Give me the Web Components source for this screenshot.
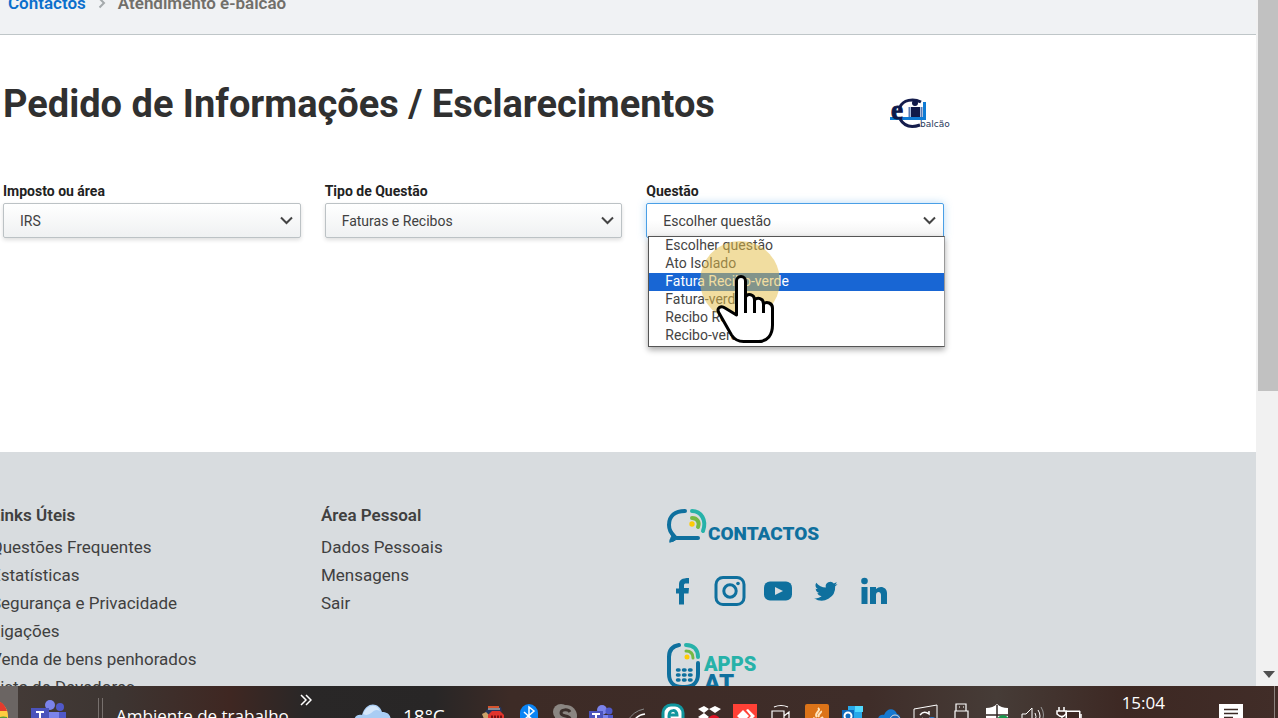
<!DOCTYPE html>
<html lang="pt">
<head>
<meta charset="utf-8">
<meta name="viewport" content="width=device-width, initial-scale=1">
<title>Atendimento e-balcão</title>
<style>
html, body { margin: 0; height: 100%; overflow: hidden; }
body { font-family: Roboto, "Liberation Sans", sans-serif; color: #333; background: #fff; }
</style>
</head>
<body>
<screen-app></screen-app>
<script>
function define(name, html, setup) {
  const tpl = document.createElement('template');
  tpl.innerHTML = html;
  customElements.define(name, class extends HTMLElement {
    constructor() {
      super();
      this.attachShadow({ mode: 'open' }).append(tpl.content.cloneNode(true));
    }
    connectedCallback() {
      if (setup && !this.ready) { this.ready = true; setup(this, this.shadowRoot); }
    }
  });
}

define('bread-crumb', `
<style>
:host { display: flex; align-items: flex-start; height: 34px; overflow: hidden; background: #f0f2f4; border-bottom: 1px solid #bfc6c8; }
nav { display: flex; align-items: center; gap: 12px; margin-top: -9px; padding-left: 8px; font-size: 17px; line-height: 24px; font-weight: 600; color: #716f6a; }
a { color: #0b6fcc; text-decoration: none; }
svg { width: 8px; height: 12px; }
</style>
<nav aria-label="Percurso"><a href="#contactos">Contactos</a>
<svg viewBox="0 0 8 12" fill="none" stroke="#a5aaac" stroke-width="2"><path d="M1.5 1.500L6 6 1.500 10.500"/></svg>
<span>Atendimento e-balcão</span></nav>`);

define('balcao-logo', `
<style>
:host { display: block; width: 64px; height: 34px; }
svg { display: block; width: 100%; height: 100%; }
</style>
<svg viewBox="0 0 64 34" role="img" aria-label="e-balcão">
<path d="M35 5h3v18H2v-3h33z" fill="#0f7bd4"/>
<path d="M12 10C15 3 25 1 33 5M12 22C16 29 23 31 32 28" fill="none" stroke="#151d4c" stroke-width="3"/>
<circle cx="27" cy="6" r="3" fill="#111a49"/><path d="M23 10h9v10h-9z" fill="#111a49"/><path d="M21.500 10v10M33.500 10v10" stroke="#5a7ab4" stroke-width="2"/>
<text x="3" y="22" font-family="Liberation Serif, serif" font-size="27" font-weight="700" fill="#0c184b" stroke="#0c184b">e</text>
<text x="32" y="30" font-family="DejaVu Sans, sans-serif" font-size="9" fill="#29395c">balcão</text>
</svg>`);

define('select-field', `
<style>
:host { display: block; position: relative; min-width: 0; }
label { display: block; font-size: 14px; line-height: 20px; font-weight: 700; color: #222; margin-bottom: 2px; }
.box { position: relative; }
select { appearance: none; display: block; box-sizing: border-box; width: 100%; height: 35px; padding: 0 40px 0 16px; border: 1px solid #bcc2c5; border-radius: 2px;
  background: linear-gradient(#fff, #eff1f2); box-shadow: 0 2px 4px #0002; font: 14px/20px Roboto, sans-serif; color: #404040; outline: 0; }
:host([open]) select { border-color: #4a9fe6; box-shadow: 0 0 8px #4a9fe666; background: linear-gradient(#fff 50%, #f2f2f2); }
.box svg { position: absolute; right: 8px; top: 13px; width: 13px; height: 9px; pointer-events: none; }
</style>
<label for="control"></label>
<div class="box"><select id="control"></select>
<svg viewBox="0 0 13 9" fill="none" stroke="#444" stroke-width="2"><path d="M1 1.500L6.500 7 12 1.500"/></svg></div>
<slot></slot>`, (el, root) => {
  root.querySelector('label').textContent = el.getAttribute('label');
  for (const text of el.getAttribute('options').split('|')) root.querySelector('select').add(new Option(text));
});

define('option-popup', `
<style>
:host { position: absolute; z-index: 2; left: 2px; right: -1px; top: 55px; }
ul { margin: 0; padding: 0 0 1px; list-style: none; background: #fff; border: 1px solid #555; border-right-color: #999; box-shadow: 0 3px 6px #0005; }
li { padding: 0 0 2px 16px; font-size: 14px; line-height: 16px; color: #444; }
li[aria-selected=true] { background: #1866d4; color: #fff; }
</style>
<ul role="listbox" aria-label="Questão"></ul>`, (el, root) => {
  for (const text of el.getAttribute('options').split('|')) {
    const li = document.createElement('li');
    li.setAttribute('role', 'option');
    li.setAttribute('aria-selected', String(text === el.getAttribute('active')));
    li.textContent = text;
    root.querySelector('ul').append(li);
  }
});

define('hand-pointer', `
<style>
:host { position: absolute; z-index: 3; left: 54px; top: 60px; width: 80px; height: 106px; pointer-events: none; }
svg { display: block; }
</style>
<svg width="80" height="106" viewBox="700 241 80 106" aria-hidden="true">
<circle cx="740" cy="281" r="40" fill="#e5bd49" fill-opacity=".52"/>
<path d="M736.500 315V281a4.500 4.500 0 0 1 9 0v16c2-4 9-3 9 3 3-3 9-2 9 4 3-3 9-1 9 4v17c0 10-5 16.500-14 16.500h-15c-5 0-9-2-12-6.500L719 313c-3-5 2-8 6-5z" fill="#fff" stroke="#000" stroke-width="3" stroke-linejoin="round"/>
<path d="M745.500 295v18M754.500 299v14M763.500 303v10" stroke="#000" stroke-width="3"/>
</svg>`);

define('request-form', `
<style>
:host { display: block; flex: 0 0 417px; }
.wrap { max-width: 941px; padding-left: 3px; }
header { display: flex; justify-content: space-between; align-items: center; height: 50px; padding-top: 44px; }
h1 { margin: 0; font-size: 38px; line-height: 50px; font-weight: 700; color: #303030; white-space: nowrap; }
balcao-logo { margin: 20px -8px 0 0; }
form { display: grid; grid-template-columns: repeat(3, minmax(0, 1fr)); gap: 24px; margin-top: 52px; }
</style>
<div class="wrap"><header><h1>Pedido de Informações / Esclarecimentos</h1><balcao-logo></balcao-logo></header>
<form>
<select-field label="Imposto ou área" options="IRS"></select-field>
<select-field label="Tipo de Questão" options="Faturas e Recibos"></select-field>
<select-field open label="Questão" options="Escolher questão|Ato Isolado|Fatura Recibo-verde|Fatura-verde|Recibo Renda|Recibo-verde">
<option-popup active="Fatura Recibo-verde" options="Escolher questão|Ato Isolado|Fatura Recibo-verde|Fatura-verde|Recibo Renda|Recibo-verde"></option-popup>
<hand-pointer></hand-pointer></select-field>
</form></div>`);

define('link-list', `
<style>
:host { display: block; min-width: 0; white-space: nowrap; }
h2 { margin: 0 0 4px; font-size: 17px; line-height: 28px; font-weight: 600; color: #404040; }
::slotted(a) { display: block; font-size: 17px; line-height: 28px; color: #404040; text-decoration: none; }
</style>
<h2></h2><slot></slot>`, (el, root) => { root.querySelector('h2').textContent = el.getAttribute('heading'); });

define('contact-panel', `
<style>
:host { display: block; }
a { display: block; text-decoration: none; }
.brand { display: flex; height: 36px; }
.brand b { font-size: 19px; line-height: 20px; font-weight: 900; color: #0f709e; margin: 16px 0 0 1px; }
.social { display: flex; align-items: center; height: 32px; margin: 31px 0 35px 2px; gap: 20px; }
.social a { width: 28px; height: 32px; }
svg { display: block; flex: none; overflow: visible; }
.brand.apps b { margin: 12px 0 0 -3px; color: #27b2a9; font-size: 20px; line-height: 20px; }
.apps span { display: block; font-size: 24px; line-height: 18px; color: #0f709e; }
</style>
<a class="brand" href="#contactos"><svg width="40" height="36" viewBox="0 0 40 36" fill="none" stroke-linecap="round" stroke-width="4">
<path d="M18 3C8 3 2 8 2 17c0 5 2 8 5 11M10 30h21" stroke="#0f709e"/><path d="M3 34c-1-3 2-4 2-8l8 4c-4 0-5 4-10 4z" fill="#0f709e" stroke="#0f709e" stroke-width="1"/>
<path d="M25 3c9 0 15 9 11 20" stroke="#27b2a9"/><path d="M25 10c5 0 8 4 6 9" stroke="#76b943"/><circle cx="25" cy="16" r="2.700" fill="#ffcb05"/></svg><b>CONTACTOS</b></a>
<div class="social">
<a href="#facebook" aria-label="Facebook"><svg width="28" height="32" viewBox="0 0 28 32" fill="#0f709e"><path d="M10 29.500V18.500H7v-5h3V9.500C10 5 13 3 20 3v5.500h-3c-1.500 0-2 .5-2 2v2.500h5l-.5 5.500H15v11z"/></svg></a>
<a href="#instagram" aria-label="Instagram"><svg width="28" height="32" viewBox="0 0 28 32" fill="none" stroke="#0f709e" stroke-width="3"><rect x="-1" y="2.500" width="28" height="27" rx="7"/><circle cx="13" cy="16" r="6.200"/><circle cx="21" cy="8.500" r="1.800" fill="#0f709e" stroke="none"/></svg></a>
<a href="#youtube" aria-label="YouTube"><svg width="28" height="32" viewBox="0 0 28 32"><rect y="6.500" x="-1" width="28" height="19" rx="6" fill="#0f709e"/><path d="M10 12v8l8-4z" fill="#d8dcdf"/></svg></a>
<a href="#twitter" aria-label="Twitter"><svg width="28" height="32" viewBox="1 0 24 24" fill="#0f709e"><path d="M22 6.100c-.7.300-1.500.5-2.300.6.800-.5 1.400-1.200 1.700-2.100-.8.400-1.600.7-2.500.9a4 4 0 0 0-6.900 3.600C8.700 9 5.800 7.400 3.800 5a4 4 0 0 0 1.200 5.300c-.6 0-1.200-.2-1.700-.5 0 2 1.400 3.600 3.100 3.900-.5.100-1.100.2-1.700.1.500 1.500 2 2.600 3.700 2.700A8 8 0 0 1 2 18.200a11.500 11.500 0 0 0 18-10.200c.8-.5 1.500-1.200 2-1.900z"/></svg></a>
<a href="#linkedin" aria-label="LinkedIn"><svg width="28" height="32" viewBox="0 0 28 32" fill="#0f709e"><circle cx="3.500" cy="6" r="3.300"/><path d="M.5 12h6v17h-6zM9 12h6v2c4-4 11-2 11 4v11h-6v-9c0-4-5-4-5 0v9H9z"/></svg></a>
</div>
<a class="brand apps" href="#apps"><svg width="40" height="48" viewBox="0 0 40 48" fill="none" stroke-linecap="round" stroke-width="4">
<path d="M12 3C6 4 2 8 2 15v17c0 7 4 13 13 13h3c9 0 13-6 13-13V21" stroke="#0f709e"/><path d="M19 3c8 0 12 5 12 12" stroke="#27b2a9"/><path d="M19 9c5 0 7 3 7 7" stroke="#76b943" stroke-width="3"/><circle cx="20" cy="15" r="2.500" fill="#ffcb05"/>
<path d="M10.500 28h1.500M16.500 28h1.500M22.500 28h1.500M10.500 33h1.500M16.500 33h1.500M22.500 33h1.500M10.500 38h1.500M16.500 38h1.500M22.500 38h1.500" stroke="#0f709e" stroke-width="3.500"/></svg><b>APPS<span>AT</span></b></a>`);

define('site-footer', `
<style>
:host { display: block; flex: 1; min-height: 0; overflow: hidden; background: #d8dcdf; }
.cols { display: grid; grid-template-columns: 330px 346px 1fr; margin-left: -9px; padding-top: 49px; }
contact-panel { margin-top: 7px; }
</style>
<div class="cols">
<link-list heading="Links Úteis"><a href="#1">Questões Frequentes</a><a href="#2">Estatísticas</a><a href="#3">Segurança e Privacidade</a><a href="#4">Ligações</a><a href="#5">Venda de bens penhorados</a><a href="#6">Lista de Devedores</a></link-list>
<link-list heading="Área Pessoal"><a href="#7">Dados Pessoais</a><a href="#8">Mensagens</a><a href="#9">Sair</a></link-list>
<contact-panel></contact-panel></div>`);

define('scroll-track', `
<style>
:host { display: flex; flex-direction: column; justify-content: space-between; align-items: center; width: 22px; background: #f1f1f1; }
i { display: block; width: 20px; height: 57%; margin-left: 2px; background: #c1c1c1; }
svg { width: 12px; height: 7px; margin: 0 0 8px 3px; }
</style><i></i><svg viewBox="0 0 12 7"><path d="M0 0h12L6 7z" fill="#505050"/></svg>`);

const trayIcons = {
  police: '<path d="M4 8l4-5h12l1 4-3 4H8z" fill="#26365d"/><path d="M7 2h11v2H7z" fill="#d5542f"/><path d="M7 5h12" stroke="#e8e0d0"/><path d="M1 10l4-2 3 3v4H3z" fill="#caa36b"/><path d="M11 7h8l4 4v8H7v-8z" fill="#e0342c"/><path d="M10 13h11" stroke="#711" stroke-width="3" stroke-dasharray="2 1"/>',
  bluetooth: '<rect x="3" width="18" height="26" rx="9" fill="#0a84f5"/><path d="M7 8l10 9-5 4V3l5 4-10 9" fill="none" stroke="#fff" stroke-width="1.500"/>',
  skype: '<circle cx="8" cy="8" r="8" fill="#8b8682"/><circle cx="13" cy="12" r="11" fill="#8b8682"/><path d="M17 8c-2-3-9-3-9 1s9 2 9 6-7 4-9 1" fill="none" stroke="#3c302c" stroke-width="3"/>',
  teams: '<circle cx="13" cy="6" r="5" fill="#7b83eb"/><circle cx="20" cy="7" r="3.500" fill="#5059c9"/><path d="M15 11h9v9h-9z" fill="#5059c9"/><path d="M7 11h12v14H7z" fill="#7b83eb"/><path d="M0 7h14v17H0z" fill="#4b53bc"/><path d="M3 10h8M7 10v10" stroke="#fff" stroke-width="2"/>',
  wifi: '<path d="M2 18Q8 7 19 5" fill="none" stroke="#888"/><path d="M7 20q4-9 13-10" fill="none" stroke="#fff" stroke-width="1.500"/>',
  eset: '<rect x="2" y="1" width="20" height="28" rx="8" fill="#fff" stroke="#11969e" stroke-width="3"/><path d="M8 11h8c0-6-8-6-8 1 0 6 5 6 8 4" fill="none" stroke="#11969e" stroke-width="3"/>',
  dropbox: '<path d="M1 5l6-3 5 3-5 4zM12 5l6-3 6 3-6 4zM1 13l6-4 5 4-5 4z" fill="#fff"/><circle cx="17" cy="17" r="6" fill="#e01224"/>',
  anydesk: '<path d="M0 0h24v24H0z" fill="#ff4136"/><path d="M4 12l6-6 6 6-6 6zM13 6l2-1 7 7-7 7-2-2 5-5z" fill="#fff"/>',
  camera: '<path d="M5 3q7-3 14 0M3 7h12v12H3zM15 12l5-4v11" fill="none" stroke="#fff" stroke-width="1.200"/>',
  java: '<rect width="24" height="24" rx="2" fill="#dc7318"/><path d="M13 4c4 3-5 5-1 9M16 7c1 2-4 3-2 6M8 14c4 2 8 1 10-1" fill="none" stroke="#ffe4bd" stroke-width="2"/>',
  outlook: '<path d="M7 2h14v14H7z" fill="#28a8ea"/><path d="M14 2h8v6h-8z" fill="#50d9ff"/><path d="M1 6h12v16H1z" fill="#0f6cbd"/><circle cx="7" cy="12" r="3.500" fill="none" stroke="#fff" stroke-width="2"/>',
  onedrive: '<path d="M1 16c0-5 4-6 6-5 3-8 11-7 13-1 5 1 4 9 0 9H3z" fill="#1478d0"/><circle cx="18" cy="16" r="5" fill="#1a66b5" stroke="#ddd"/>',
  sync: '<path d="M1 5l23-4v20H1z" fill="none" stroke="#fff"/><path d="M7 11q4-5 9-1v-3M17 14q-5 4-8 0" fill="none" stroke="#fff" stroke-width="1.500"/><circle cx="19" cy="17" r="4" fill="#287ed0"/>',
  usb: '<path d="M7 7V0h10v7M6 7h13v14H6zM10 3h1M14 3h1" fill="none" stroke="#fff" stroke-width="1.200"/>',
  shield: '<path d="M1 4q7 0 11-4 4 4 11 4v12H1z" fill="#fff"/><path d="M12 1v18M1 11h22" stroke="#322724" stroke-width="1.500"/><circle cx="18" cy="17" r="6" fill="#16964b"/>',
  sound: '<path d="M1 10h4l6-6v16l-6-5H1zM14 9q2 3 0 8M17 6q4 6 0 12" fill="none" stroke="#fff"/><path d="M20 3q5 8 0 16" fill="none" stroke="#999"/>',
  power: '<path d="M9 7h14v12H9z" fill="#fff" stroke="#fff"/><path d="M10 8h12v11H10z" fill="#3d2823"/><path d="M2 3v4M7 3v4M0 7h9v3q-4 5-9 0zM5 13v8M24 10v6" fill="#3d2823" stroke="#fff" stroke-width="1.500"/>'
};
define('tray-icon', `
<style>:host { display: grid; justify-items: center; } svg { display: block; width: 24px; height: 24px; overflow: visible; }</style>
<svg viewBox="0 0 24 24" aria-hidden="true"></svg>`, (el, root) => {
  root.querySelector('svg').innerHTML = trayIcons[el.getAttribute('name')];
});

define('task-bar', `
<style>
:host { display: block; height: 32px; overflow: hidden; color: #fff;
  background: linear-gradient(90deg, #443b37, #3d3532 9%, #3f2722 18%, #292727 24%, #282626 34%, #3d2b26 40%, #3f2d29 68%, #463c37 78%, #3d2823 88%, #412d28); }
.bar { display: flex; align-items: flex-start; height: 60px; font-family: "Open Sans", sans-serif; white-space: nowrap; }
.start { width: 18px; height: 60px; background: #6b6563; overflow: hidden; }
svg { display: block; flex: none; }
.teams { margin: 14px 31px 0 13px; }
.sep { width: 3px; height: 48px; margin-top: 12px; border: solid #77706d; border-width: 0 1px; }
.desk { width: 197px; padding-left: 13px; margin-top: 18px; font-size: 17px; line-height: 24px; box-sizing: border-box; }
.more { margin-top: 8px; }
.cloud { margin: 18px 12px 0 42px; }
.temp { flex: 1; font-size: 19px; line-height: 24px; margin-top: 18px; }
.tray { display: grid; grid-template-columns: repeat(17, 36px); margin-top: 18px; }
time { margin: 5px 54px 0 35px; font-size: 17px; line-height: 24px; }
.note { margin-top: 18px; }
.edge { width: 1px; height: 60px; margin: 0 3px 0 31px; background: #8b827e; }
</style>
<div class="bar">
<div class="start"><svg width="18" height="60" viewBox="0 0 18 60"><circle cx="-8" cy="30" r="16" fill="#ffcd40"/><path d="M-8 14Q4 14 7 25H-8z" fill="#e33b2e"/><path d="M-8 42q4-14 15-11v16z" fill="#5b9a36"/></svg></div>
<svg class="teams" width="36" height="36" viewBox="0 0 36 36"><circle cx="19" cy="5" r="5" fill="#7b83eb"/><circle cx="29" cy="7" r="4" fill="#5059c9"/><path d="M20 12h15v15H20z" fill="#5059c9"/><path d="M10 12h18v20H10z" fill="#7b83eb"/><path d="M0 8h18v20H0z" fill="#4b53bc"/><path d="M5 12h8M9 12v12" stroke="#fff" stroke-width="2"/></svg>
<div class="sep"></div><div class="desk">Ambiente de trabalho</div>
<svg class="more" width="12" height="12" viewBox="0 0 12 12" fill="none" stroke="#fff" stroke-width="1.500"><path d="M1 1l5 5-5 5M6 1l5 5-5 5"/></svg>
<svg class="cloud" width="37" height="28" viewBox="0 0 37 28"><path d="M0 18c0-7 5-8 8-7C12-3 25-2 28 8c7 0 9 4 9 10 0 6-3 8-8 8H8c-5 0-8-3-8-8z" fill="#a9cdf4"/><path d="M9 10C13 0 23-1 26 7 18 3 18 14 9 10z" fill="#d4e6fa"/></svg>
<span class="temp">18°C</span><div class="tray"></div><time>15:04</time>
<svg class="note" width="24" height="24" viewBox="0 0 24 24"><path d="M0 0h24v20H12l-4 4v-4H0z" fill="#fff"/><path d="M5 5.500h14M5 9.500h14M5 13.500h9" stroke="#3b2924" stroke-width="1.500"/></svg>
<div class="edge"></div></div>`, (el, root) => {
  root.querySelector('.tray').innerHTML = Object.keys(trayIcons).map(n => `<tray-icon name="${n}"></tray-icon>`).join('');
});

define('screen-app', `
<style>
:host { display: flex; flex-direction: column; height: 100vh; overflow: hidden; }
.view { display: flex; flex: 1; min-height: 0; }
main { display: flex; flex-direction: column; flex: 1; min-width: 0; overflow: hidden; }
bread-crumb, task-bar { flex: none; }
</style>
<div class="view"><main><bread-crumb></bread-crumb><request-form></request-form><site-footer></site-footer></main><scroll-track></scroll-track></div>
<task-bar></task-bar>`);
</script>
</body>
</html>
